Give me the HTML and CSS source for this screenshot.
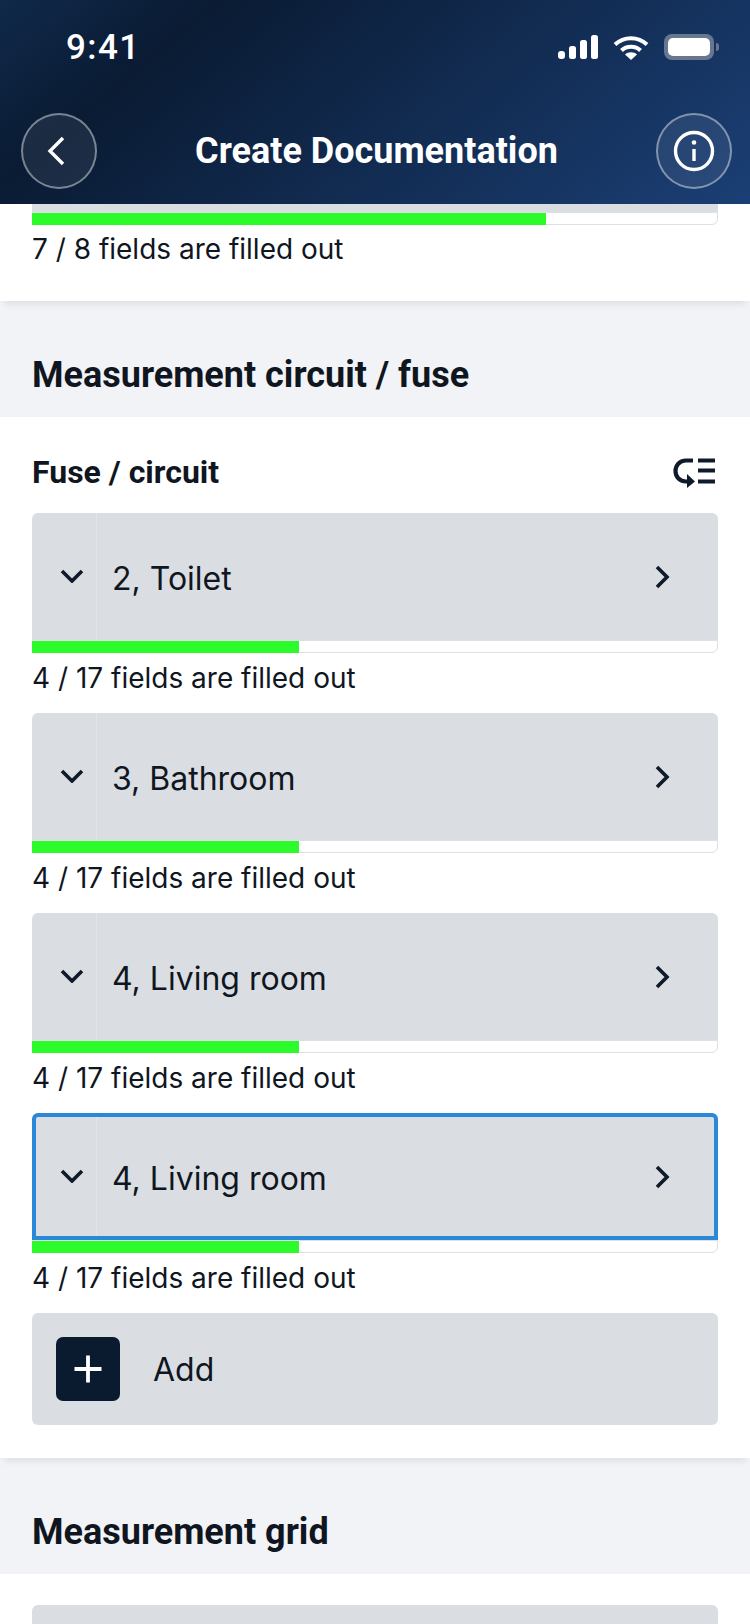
FILE: index.html
```html
<!DOCTYPE html>
<html lang="en">
<head>
  <meta charset="UTF-8" />
  <meta name="viewport" content="width=device-width, initial-scale=1.0"/>
  <title>Create Documentation</title>
  <link rel="stylesheet" href="styles.css">
</head>
<body>

<svg class="defs" width="0" height="0">
  <symbol id="chevron-down" viewBox="0 0 24 14">
    <path d="M2 2l10 10L22 2" fill="none" stroke="currentColor" stroke-width="3.600"/>
  </symbol>
  <symbol id="chevron-right" viewBox="0 0 16 24">
    <path d="M3 2l10 10L3 22" fill="none" stroke="currentColor" stroke-width="3.600"/>
  </symbol>
</svg>

<header class="app-header">
  <div class="status-bar">
    <span class="time">9:41</span>
    <div class="status-icons">
      <svg width="40" height="24" viewBox="0 0 40 24" fill="#fff">
        <rect x="0" y="16" width="7" height="8" rx="3"/>
        <rect x="11" y="11" width="7" height="13" rx="2.500"/>
        <rect x="22" y="5" width="7" height="19" rx="2.500"/>
        <rect x="33" y="0" width="7" height="24" rx="2.500"/>
      </svg>
      <svg width="36" height="25" viewBox="0 0 36 25" fill="none" stroke="#fff" stroke-width="4">
        <path d="M2 9.500C11 1 25 1 34 9.500"/>
        <path d="M8.500 15.500C13.500 10.500 22.500 10.500 27.500 15.500"/>
        <path d="M18 25l-6-5.500c3-3 9-3 12 0z" fill="#fff" stroke="none"/>
      </svg>
      <div class="battery"><div class="battery-level"></div></div>
    </div>
  </div>
  <div class="nav-bar">
    <button class="round-btn">
      <svg class="back-icon" width="20" height="32" viewBox="0 0 20 32" fill="none" stroke="#fff" stroke-width="3.400">
        <path d="M17 3L4 16l13 13"/>
      </svg>
    </button>
    <h1 class="nav-title">Create Documentation</h1>
    <button class="round-btn">
      <svg width="42" height="42" viewBox="0 0 42 42" fill="none" stroke="#fff" stroke-width="3.400">
        <circle cx="21" cy="21" r="18.500"/>
        <path d="M21 19v12"/>
        <circle cx="21" cy="12.500" r="2.300" fill="#fff" stroke="none"/>
      </svg>
    </button>
  </div>
</header>

<section class="panel panel-top">
  <div class="card-end"></div>
  <div class="progress"><div class="progress-fill" style="width: 75.200%"></div></div>
  <p class="progress-text">7 / 8 fields are filled out</p>
</section>

<h2 class="section-title">Measurement circuit / fuse</h2>

<section class="panel panel-list">
  <div class="list-head">
    <h3 class="list-title">Fuse / circuit</h3>
    <svg class="reorder-icon" width="42" height="32" viewBox="0 0 42 32" fill="none" stroke="#0f1a2a" stroke-width="4.200">
      <path d="M20 3.500H13C6 3.500 2.500 9 2.500 14S6 24.500 13 24.500h3"/>
      <path d="M14 17l8 7.500-8 6.500z" fill="#0f1a2a" stroke="none"/>
      <path d="M25 3.500h17M25 13.500h17M25 24.500h17"/>
    </svg>
  </div>

  <div class="item">
    <div class="item-card">
      <div class="item-toggle"><svg class="icon-down"><use href="#chevron-down"/></svg></div>
      <span class="item-name">2, Toilet</span>
      <svg class="icon-right"><use href="#chevron-right"/></svg>
    </div>
    <div class="progress"><div class="progress-fill" style="width: 39%"></div></div>
    <p class="progress-text">4 / 17 fields are filled out</p>
  </div>

  <div class="item">
    <div class="item-card">
      <div class="item-toggle"><svg class="icon-down"><use href="#chevron-down"/></svg></div>
      <span class="item-name">3, Bathroom</span>
      <svg class="icon-right"><use href="#chevron-right"/></svg>
    </div>
    <div class="progress"><div class="progress-fill" style="width: 39%"></div></div>
    <p class="progress-text">4 / 17 fields are filled out</p>
  </div>

  <div class="item">
    <div class="item-card">
      <div class="item-toggle"><svg class="icon-down"><use href="#chevron-down"/></svg></div>
      <span class="item-name">4, Living room</span>
      <svg class="icon-right"><use href="#chevron-right"/></svg>
    </div>
    <div class="progress"><div class="progress-fill" style="width: 39%"></div></div>
    <p class="progress-text">4 / 17 fields are filled out</p>
  </div>

  <div class="item">
    <div class="item-card selected">
      <div class="item-toggle"><svg class="icon-down"><use href="#chevron-down"/></svg></div>
      <span class="item-name">4, Living room</span>
      <svg class="icon-right"><use href="#chevron-right"/></svg>
    </div>
    <div class="progress"><div class="progress-fill" style="width: 39%"></div></div>
    <p class="progress-text">4 / 17 fields are filled out</p>
  </div>

  <div class="add-row">
    <div class="add-btn">
      <svg width="30" height="30" viewBox="0 0 30 30" fill="none" stroke="#fff" stroke-width="3.800">
        <path d="M15 1.500v27M1.500 15h27"/>
      </svg>
    </div>
    <span class="add-label">Add</span>
  </div>
</section>

<h2 class="section-title">Measurement grid</h2>

<section class="panel panel-next">
  <div class="item-card"></div>
</section>

</body>
</html>
```

FILE: styles.css
```css
* {
  margin: 0;
  padding: 0;
  box-sizing: border-box;
}

body {
  font-family: Inter, "Liberation Sans", sans-serif;
  background: #f1f3f6;
  color: #10161f;
  width: 750px;
  height: 1624px;
  overflow: hidden;
}

.defs {
  position: absolute;
}

.app-header {
  height: 204px;
  background: linear-gradient(140deg, #10294a 0%, #0a1b33 22%, #1b3f75 100%);
  color: white;
  padding-top: 28px;
}

.status-bar {
  display: flex;
  justify-content: space-between;
  align-items: center;
  height: 38px;
  padding: 0 36px 0 66px;
}

.time {
  font-family: Roboto, sans-serif;
  font-size: 35px;
  font-weight: 500;
  letter-spacing: 1.400px;
}

.status-icons {
  display: flex;
  align-items: center;
  gap: 15px;
}

.battery {
  position: relative;
  width: 50px;
  height: 26px;
  padding: 4px;
  border-radius: 8px;
  background: #67778f;
}

.battery::after {
  content: "";
  position: absolute;
  right: -5px;
  top: 9px;
  width: 3px;
  height: 8px;
  border-radius: 0 3px 3px 0;
  background: #67778f;
}

.battery-level {
  height: 100%;
  border-radius: 5px;
  background: white;
}

.nav-bar {
  display: flex;
  justify-content: space-between;
  align-items: center;
  padding: 47px 18px 0 21px;
}

.round-btn {
  display: flex;
  justify-content: center;
  align-items: center;
  width: 76px;
  height: 76px;
  border-radius: 50%;
  border: 2px solid rgba(255, 255, 255, 0.42);
  background: rgba(255, 255, 255, 0.07);
}

.back-icon {
  margin-right: 7px;
}

.nav-title {
  font-family: Roboto, sans-serif;
  font-size: 36px;
  font-weight: 700;
}

.panel {
  background: white;
  padding: 0 32px;
  box-shadow: 0 8px 6px -4px rgba(0, 0, 0, 0.07);
}

.panel-top {
  height: 97px;
}

.card-end {
  height: 8px;
  background: #dadee2;
}

.progress {
  height: 13px;
  background: white;
  border: 1px solid #dcdfe3;
  border-radius: 0 0 6px 0;
}

.progress-fill {
  height: 12px;
  margin: 0 -1px;
  background: #2bfb2b;
}

.progress-text {
  font-size: 28px;
  line-height: 32px;
  margin-top: 9px;
}

.panel-top .progress-text {
  margin-top: 8px;
}

.section-title {
  font-family: Roboto, sans-serif;
  font-size: 36px;
  font-weight: 700;
  line-height: 40px;
  padding: 54px 32px 22px;
}

.panel-list {
  padding-top: 36px;
  padding-bottom: 33px;
}

.panel-next {
  padding-top: 31px;
}

.list-head {
  display: flex;
  justify-content: space-between;
  align-items: center;
  height: 40px;
  margin-bottom: 20px;
}

.list-title {
  font-family: Roboto, sans-serif;
  font-size: 32px;
  font-weight: 700;
  padding-bottom: 2px;
}

.reorder-icon {
  margin-right: 3px;
}

.item {
  margin-bottom: 19px;
}

.item-card {
  display: flex;
  align-items: center;
  height: 127px;
  background: #dadee2;
  border-radius: 6px 6px 0 0;
}

.item-card.selected {
  border: 4px solid #2b88d8;
}

.item-toggle {
  display: flex;
  align-items: center;
  flex: none;
  width: 65px;
  height: 100%;
  padding-left: 28px;
  border-right: 1px solid #e2e5e8;
}

.selected .item-toggle {
  width: 61px;
  padding-left: 24px;
}

.icon-down {
  flex: none;
  width: 24px;
  height: 14px;
  margin-top: -2px;
  color: #0f1a2a;
}

.item-name {
  flex: 1;
  margin-left: 15px;
  padding-top: 3px;
  font-size: 32px;
}

.icon-right {
  flex: none;
  width: 16px;
  height: 24px;
  margin-right: 48px;
  color: #0f1a2a;
}

.selected .icon-right {
  margin-right: 44px;
}

.add-row {
  display: flex;
  align-items: center;
  height: 112px;
  padding-left: 24px;
  background: #dadee2;
  border-radius: 6px;
}

.add-btn {
  display: flex;
  justify-content: center;
  align-items: center;
  width: 64px;
  height: 64px;
  border-radius: 7px;
  background: #0a1b30;
}

.add-label {
  margin-left: 33px;
  font-size: 32px;
}
```
